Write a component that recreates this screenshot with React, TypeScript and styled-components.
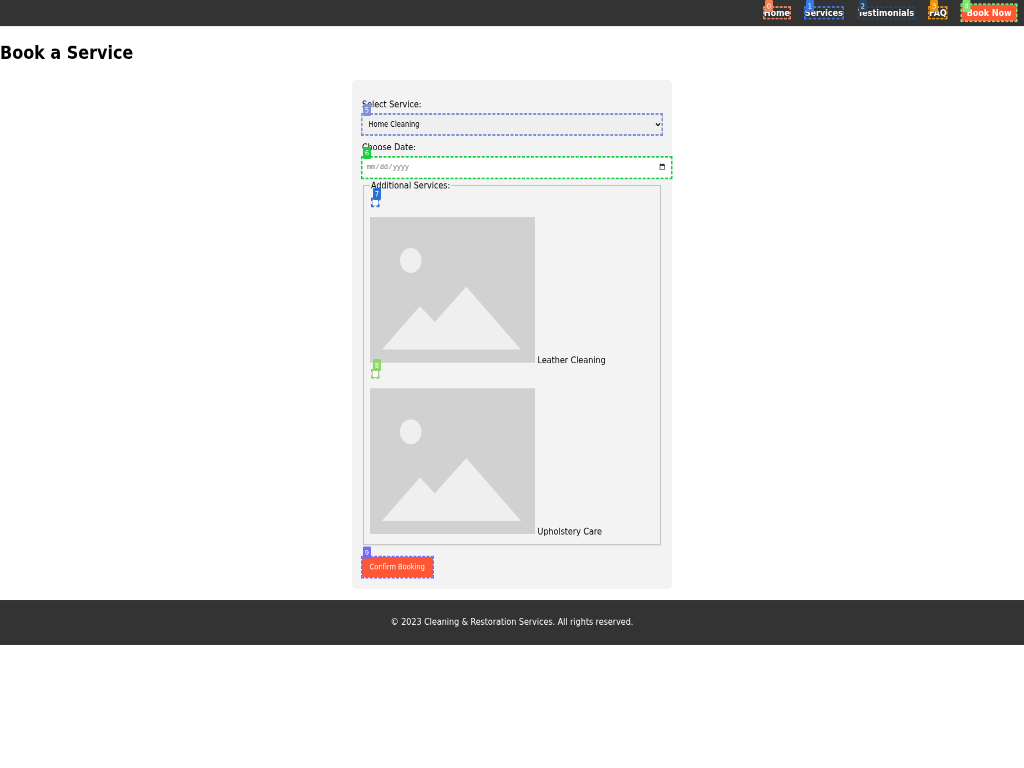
import React from "react";
import styled, { createGlobalStyle } from "styled-components";

const GlobalStyle = createGlobalStyle`
  body { margin: 0; background: #fff; }
  * { box-sizing: border-box; }
`;

const Viewport = styled.div`
  width: 1024px;
  height: 768px;
  overflow: hidden;
`;

const Page = styled.div`
  width: 2048px;
  height: 1345px;
  transform: scale(0.5, 0.5711);
  transform-origin: 0 0;
  will-change: transform;
  background: #fff;
  font: 16px/25.6px "DejaVu Sans", sans-serif;
  color: #000;
`;

const Header = styled.header`
  display: flex;
  justify-content: flex-end;
  align-items: center;
  height: 45.6px;
  background: #333;
`;

const Nav = styled.nav`
  display: flex;
  align-items: center;
  gap: 30px;
  padding-right: 15px;
`;

const NavLink = styled.a<{ $primary?: boolean }>`
  display: block;
  line-height: 19px;
  color: #fff;
  font-weight: bold;
  text-decoration: none;
  padding: ${(p) => (p.$primary ? "5px 10px" : "0")};
  background: ${(p) => (p.$primary ? "#ff5733" : "transparent")};
  border-radius: 5px;
`;

const Marked = styled.div<{ $width?: string }>`
  position: relative;
  width: ${(p) => p.$width ?? "fit-content"};
`;

const Outline = styled.span<{ $color: string }>`
  position: absolute;
  inset: -2px;
  border: 3px dashed ${(p) => p.$color};
  pointer-events: none;
`;

const Badge = styled.span<{ $color: string; $top: number }>`
  position: absolute;
  left: 2px;
  top: ${(p) => p.$top}px;
  width: 16px;
  height: 21px;
  border-radius: 2px;
  background: ${(p) => p.$color};
  color: #fff;
  font: 13px/21px "DejaVu Sans", sans-serif;
  text-align: center;
`;

const Title = styled.h1`
  margin: 21.44px 0;
  font-size: 32px;
  line-height: 51.2px;
`;

const Form = styled.form`
  width: 640px;
  height: 891px;
  margin: 0 auto 20px;
  padding: 30px 20px 20px;
  border-radius: 8px;
  background: #f3f3f3;
`;

const Label = styled.label`
  display: block;
  margin-bottom: 5px;
`;

const Select = styled.select`
  display: block;
  width: 600px;
  height: 35.5px;
  padding: 9px 9px 11px;
  border: 0;
  border-radius: 5px;
  background: #efefef;
  color: #000;
  font: 13.333px "DejaVu Sans", sans-serif;
`;

const DateInput = styled.input`
  display: block;
  width: 619px;
  height: 37px;
  padding: 9px 10px 11px 9px;
  border: 0;
  border-radius: 5px;
  background: #fff;
  font-size: 13.333px;
  &::-webkit-datetime-edit {
    color: #757575;
    font-family: "Liberation Mono", monospace;
  }
`;

const Field = styled.div`
  margin-bottom: 9px;
`;

const Extras = styled.fieldset`
  height: 643px;
  margin: -9px 2px 20px;
  padding: 5.6px 12px 10px;
  border: 2px solid #c4c4c4;
`;

const Legend = styled.legend`
  padding: 0 2px;
`;

const Option = styled.div`
  height: 300px;
`;

const CheckRow = styled.div`
  height: 36px;
  padding: 4.3px 0 0 4px;
`;

const Checkbox = styled.input`
  display: block;
  width: 13px;
  height: 13px;
  margin: 0;
`;

const OptionBody = styled.div`
  display: flex;
  align-items: flex-end;
  gap: 5px;
`;

const OptionText = styled.span`
  margin-bottom: -9px;
`;

const Confirm = styled.button`
  display: block;
  width: 142px;
  height: 35.5px;
  padding: 0 1px 1px 0;
  border: 0;
  border-radius: 5px;
  background: #ff5733;
  color: #fff;
  font: 13.333px "DejaVu Sans", sans-serif;
`;

const Footer = styled.footer`
  height: 78px;
  padding: 25px 0;
  background: #333;
  color: #fff;
  text-align: center;
`;

interface MarkProps {
  n: number;
  color: string;
  top?: number;
  width?: string;
  children: React.ReactNode;
}

function Mark({ n, color, top = -18, width, children }: MarkProps) {
  return (
    <Marked $width={width}>
      {children}
      <Outline $color={color} />
      <Badge $color={color} $top={top}>{n}</Badge>
    </Marked>
  );
}

function Placeholder() {
  return (
    <svg width="330" height="255" viewBox="0 0 330 255" preserveAspectRatio="none">
      <rect width="330" height="255" fill="#d1d1d1" />
      <ellipse cx="81.5" cy="76" rx="21.5" ry="21.8" fill="#efefef" />
      <path d="M24 232 L100 156 L129.500 184 L192.500 122 L302 232 Z" fill="#efefef" />
    </svg>
  );
}

const links = [
  { text: "Home", color: "#f58158", top: -13 },
  { text: "Services", color: "#3379e8", top: -13 },
  { text: "Testimonials", color: "#264766", top: -13 },
  { text: "FAQ", color: "#e8930c", top: -13 },
  { text: "Book Now", color: "#78ea70", top: -8 },
];

const extras = [
  { text: "Leather Cleaning", color: "#296fd6" },
  { text: "Upholstery Care", color: "#8dd768" },
];

export default function App() {
  return (
    <Viewport>
      <GlobalStyle />
      <Page>
        <Header>
          <Nav>
            {links.map((l, i) => (
              <Mark key={l.text} n={i} color={l.color} top={l.top}>
                <NavLink $primary={i === 4}>{l.text}</NavLink>
              </Mark>
            ))}
          </Nav>
        </Header>
        <Title>Book a Service</Title>
        <Form>
          <Field>
            <Label>Select Service:</Label>
            <Mark n={5} color="#8490d9" width="600px">
              <Select><option>Home Cleaning</option></Select>
            </Mark>
          </Field>
          <Field>
            <Label>Choose Date:</Label>
            <Mark n={6} color="#18ce3c" width="619px">
              <DateInput type="date" />
            </Mark>
          </Field>
          <Extras>
            <Legend>Additional Services:</Legend>
            {extras.map((e, i) => (
              <Option key={e.text}>
                <CheckRow>
                  <Mark n={i + 7} color={e.color} top={-19}>
                    <Checkbox type="checkbox" />
                  </Mark>
                </CheckRow>
                <OptionBody>
                  <Placeholder />
                  <OptionText>{e.text}</OptionText>
                </OptionBody>
              </Option>
            ))}
          </Extras>
          <Mark n={9} color="#736bf5">
            <Confirm type="button">Confirm Booking</Confirm>
          </Mark>
        </Form>
        <Footer>© 2023 Cleaning &amp; Restoration Services. All rights reserved.</Footer>
      </Page>
    </Viewport>
  );
}
